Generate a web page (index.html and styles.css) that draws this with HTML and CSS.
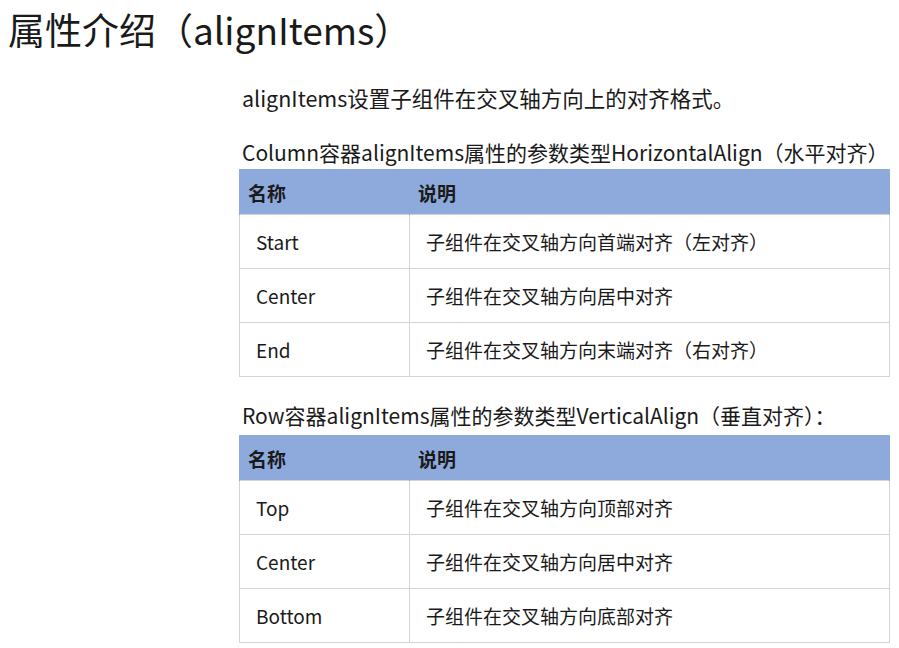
FILE: index.html
```html
<!DOCTYPE html>
<html lang="zh">
<head>
<meta charset="utf-8">
<link rel="stylesheet" href="styles.css">
</head>
<body>
<h1 class="title">属性介绍（alignItems）</h1>
<div class="content">
  <p class="intro">alignItems设置子组件在交叉轴方向上的对齐格式。</p>
  <p class="caption cap1">Column容器alignItems属性的参数类型HorizontalAlign（水平对齐）</p>
  <table class="tbl tbl1">
    <thead><tr><th class="c1">名称</th><th>说明</th></tr></thead>
    <tbody>
      <tr><td class="c1">Start</td><td>子组件在交叉轴方向首端对齐（左对齐）</td></tr>
      <tr><td class="c1">Center</td><td>子组件在交叉轴方向居中对齐</td></tr>
      <tr><td class="c1">End</td><td>子组件在交叉轴方向末端对齐（右对齐）</td></tr>
    </tbody>
  </table>
  <p class="caption cap2">Row容器alignItems属性的参数类型VerticalAlign（垂直对齐）：</p>
  <table class="tbl tbl2">
    <thead><tr><th class="c1">名称</th><th>说明</th></tr></thead>
    <tbody>
      <tr><td class="c1">Top</td><td>子组件在交叉轴方向顶部对齐</td></tr>
      <tr><td class="c1">Center</td><td>子组件在交叉轴方向居中对齐</td></tr>
      <tr><td class="c1">Bottom</td><td>子组件在交叉轴方向底部对齐</td></tr>
    </tbody>
  </table>
</div>
</body>
</html>
```
FILE: styles.css
```css
html, body {
  margin: 0;
  padding: 0;
  background: #ffffff;
}
body {
  font-family: "Noto Sans CJK SC", "Noto Sans", sans-serif;
  color: #1a1a1a;
}
.title {
  margin: 0;
  padding: 4px 0 0 8px;
  font-size: 37px;
  font-weight: 400;
  line-height: 50px;
}
.content {
  margin-left: 239px;
}
.intro {
  margin: 29px 0 0 3px;
  font-size: 21.5px;
  line-height: 30px;
  white-space: nowrap;
}
.caption {
  margin: 0 0 0 3px;
  font-size: 21px;
  line-height: 30px;
  white-space: nowrap;
}
.cap1 { margin-top: 24px; }
.cap2 { margin-top: 23px; }
.tbl {
  width: 651px;
  border-collapse: collapse;
  font-size: 19px;
}
.tbl1 { margin-top: 2px; }
.tbl2 { margin-top: 5px; }
.tbl th {
  background: #8eaadc;
  height: 44px;
  padding: 0 8px;
  text-align: left;
  font-weight: 700;
  font-size: 19px;
  border: 1px solid #8eaadc;
  border-bottom: 0;
}
.tbl th + th { border-left: 1px solid #a9bde3; }
.tbl td {
  height: 53px;
  padding: 0 16px;
  border: 1px solid #d3d3d3;
}
.tbl .c1 { width: 137px; }
```
